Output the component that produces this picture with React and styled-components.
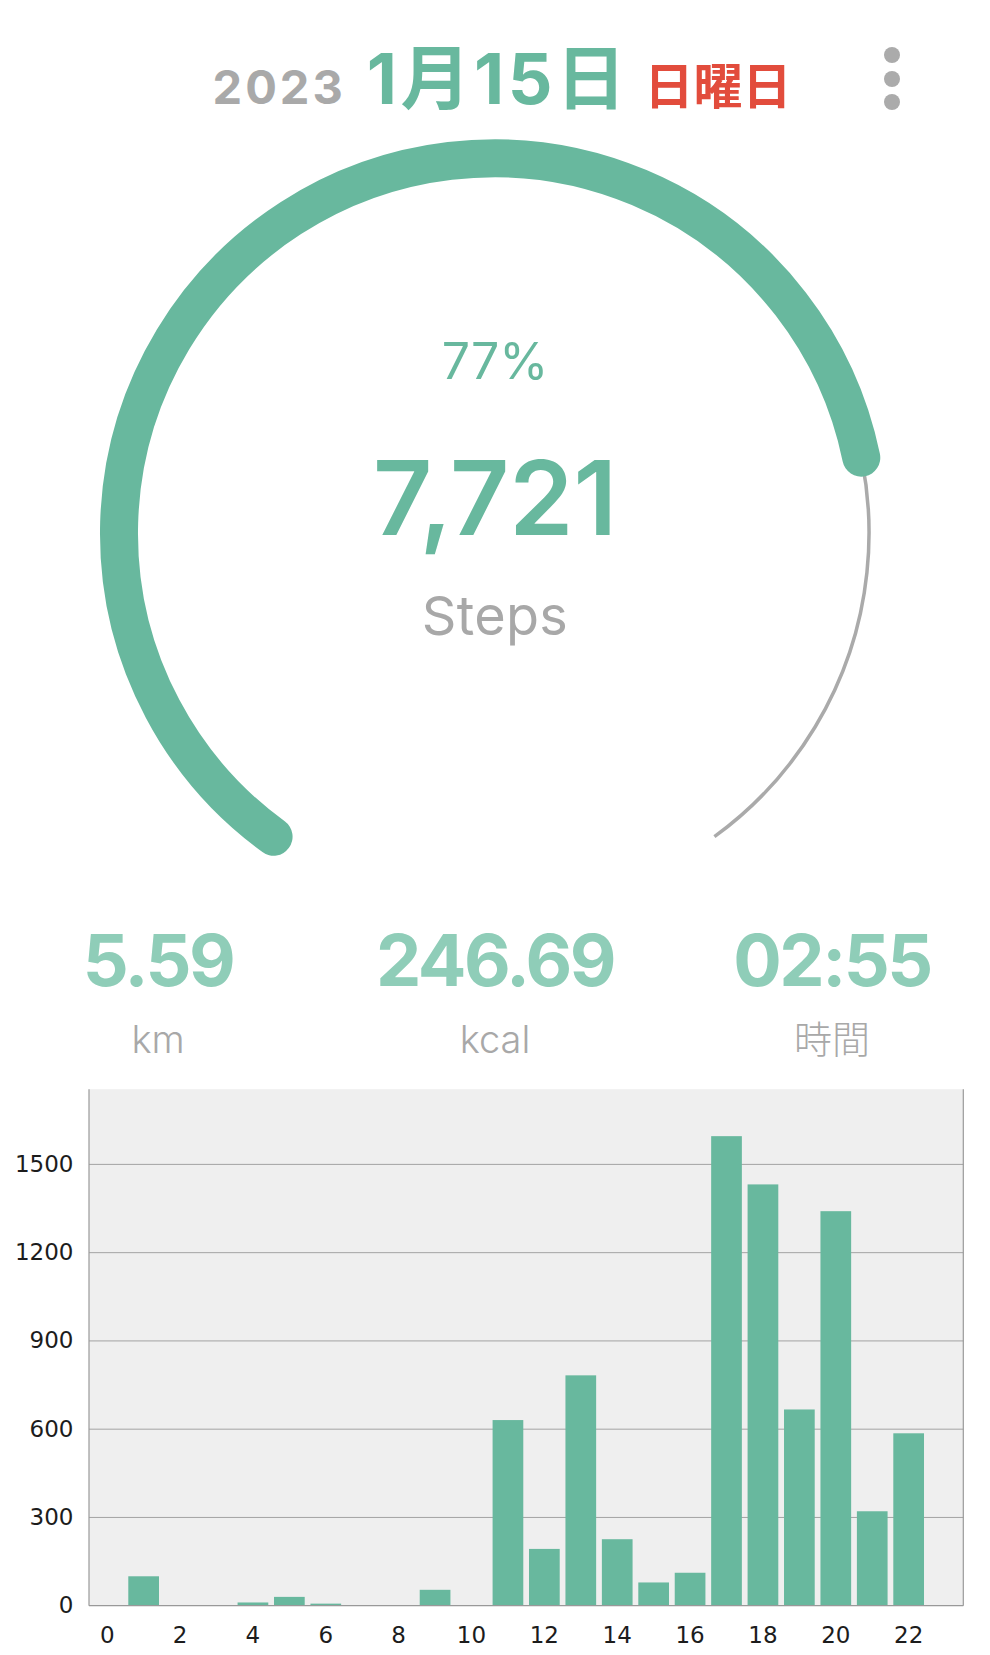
import React from 'react';
import styled, { createGlobalStyle } from 'styled-components';

const GREEN = '#68b89e';
const LIGHT_GREEN = '#8fcdb8';
const GREY_TEXT = '#a8a8a8';

const GlobalStyle = createGlobalStyle`
  html, body { margin: 0; padding: 0; background: #fff; }
  body {
    font-family: "Inter", "Noto Sans CJK JP", sans-serif;
    -webkit-font-smoothing: antialiased;
  }
`;

const Page = styled.main`
  width: 990px;
  min-height: 1655px;
  background: #fff;
  overflow: hidden;
`;

const Header = styled.header`
  display: grid;
  grid-template-columns: 1fr auto 1fr;
  align-items: start;
  height: 130px;
`;

const DateLine = styled.h1`
  grid-column: 2;
  margin: 44px 0 0;
  padding-left: 14px;
  display: flex;
  align-items: baseline;
  font-weight: 700;
  line-height: 1;
  white-space: nowrap;
`;

const Year = styled.span`
  font-size: 47px;
  letter-spacing: 3px;
  color: #a9a9a9;
  margin-right: 21px;
`;

const MonthDay = styled.span`
  font-size: 70px;
  letter-spacing: 3.5px;
  color: ${GREEN};
  margin-right: 15px;
`;

const Weekday = styled.span`
  font-size: 49px;
  color: #e24c3c;
`;

const MenuButton = styled.button`
  grid-column: 3;
  justify-self: end;
  margin: 47px 90px 0 0;
  padding: 0;
  border: 0;
  background: none;
  display: flex;
  flex-direction: column;
  gap: 7.5px;
`;

const Dot = styled.span`
  display: block;
  width: 16px;
  height: 16px;
  border-radius: 50%;
  background: #ababab;
`;

const Gauge = styled.section`
  position: relative;
  height: 770px;
  box-sizing: border-box;
  padding-top: 206px;
  display: flex;
  flex-direction: column;
  align-items: center;
`;

const GaugeSvg = styled.svg`
  position: absolute;
  left: 0;
  top: 0;
`;

const Percent = styled.div`
  position: relative;
  font-size: 50px;
  line-height: 1;
  font-weight: 400;
  color: ${GREEN};
`;

const StepCount = styled.div`
  position: relative;
  margin-top: 60px;
  font-size: 103px;
  line-height: 1;
  font-weight: 600;
  color: ${GREEN};
`;

const StepLabel = styled.div`
  position: relative;
  margin-top: 40px;
  font-size: 54px;
  line-height: 1;
  font-weight: 400;
  letter-spacing: 0.3px;
  color: ${GREY_TEXT};
`;

const Stats = styled.section`
  display: grid;
  grid-template-columns: repeat(3, 200px);
  column-gap: 137px;
  justify-content: center;
  height: 180px;
  box-sizing: border-box;
  padding-top: 24px;
`;

const Stat = styled.div`
  display: flex;
  flex-direction: column;
  align-items: center;
`;

const StatValue = styled.div`
  font-size: 72px;
  line-height: 1;
  font-weight: 700;
  letter-spacing: -2.5px;
  color: ${LIGHT_GREEN};
`;

const StatUnit = styled.div`
  margin-top: 24px;
  font-size: 38px;
  line-height: 1;
  font-weight: 300;
  color: ${GREY_TEXT};
`;

const ChartSvg = styled.svg`
  display: block;
  font-family: "DejaVu Sans", sans-serif;
  font-size: 23px;
  fill: #1c1c1c;
`;

const CX = 494;
const CY = 403.3;
const R = 375;
const START = 126;
const SPAN = 288;

const polar = (deg) => {
  const a = (deg * Math.PI) / 180;
  return [CX + R * Math.cos(a), CY + R * Math.sin(a)];
};

const arcPath = (fromDeg, toDeg) => {
  const [x1, y1] = polar(fromDeg);
  const [x2, y2] = polar(toDeg);
  const large = toDeg - fromDeg > 180 ? 1 : 0;
  return `M ${x1} ${y1} A ${R} ${R} 0 ${large} 1 ${x2} ${y2}`;
};

const steps = 7721;
const goal = 10000;

const hourly = [0, 100, 0, 0, 11, 30, 7, 0, 0, 54, 0, 631, 193, 783, 226, 79, 112, 1596, 1432, 667, 1341, 321, 586, 0];

const PLOT_L = 89;
const PLOT_R = 963.3;
const PLOT_T = 9.2;
const PLOT_B = 525.7;
const Y_MAX = 1755.6;
const SLOT = (PLOT_R - PLOT_L) / 24;
const BAR_W = 30.7;
const yOf = (v) => PLOT_B - (v / Y_MAX) * (PLOT_B - PLOT_T);

function StepChart() {
  const ticks = [0, 300, 600, 900, 1200, 1500];
  const hours = [0, 2, 4, 6, 8, 10, 12, 14, 16, 18, 20, 22];
  return (
    <ChartSvg width="990" height="575" viewBox="0 0 990 575">
      <rect x={PLOT_L} y={PLOT_T} width={PLOT_R - PLOT_L} height={PLOT_B - PLOT_T} fill="#efefef" />
      {ticks.slice(1).map((t) => (
        <line key={t} x1={PLOT_L} x2={PLOT_R} y1={yOf(t)} y2={yOf(t)} stroke="#a3a3a3" strokeWidth="1" />
      ))}
      {hourly.map((v, i) =>
        v > 0 ? (
          <rect
            key={i}
            x={PLOT_L + SLOT * i + (SLOT - BAR_W) / 2}
            y={yOf(v)}
            width={BAR_W}
            height={PLOT_B - yOf(v)}
            fill={GREEN}
          />
        ) : null
      )}
      <line x1={PLOT_L} x2={PLOT_L} y1={PLOT_T} y2={PLOT_B} stroke="#999" strokeWidth="1.2" />
      <line x1={PLOT_R} x2={PLOT_R} y1={PLOT_T} y2={PLOT_B} stroke="#999" strokeWidth="1.2" />
      <line x1={PLOT_L} x2={PLOT_R} y1={PLOT_B} y2={PLOT_B} stroke="#999" strokeWidth="1.2" />
      {ticks.map((t) => (
        <text key={t} x="73.5" y={yOf(t) + 7.4} textAnchor="end">
          {t}
        </text>
      ))}
      {hours.map((h) => (
        <text key={h} x={PLOT_L + SLOT * h + SLOT / 2} y="562.7" textAnchor="middle">
          {h}
        </text>
      ))}
    </ChartSvg>
  );
}

export default function App() {
  const pct = steps / goal;
  const greenEnd = START + SPAN * pct;
  return (
    <Page>
      <GlobalStyle />
      <Header>
        <DateLine>
          <Year>2023</Year>
          <MonthDay>1月15日</MonthDay>
          <Weekday>日曜日</Weekday>
        </DateLine>
        <MenuButton aria-label="menu">
          <Dot />
          <Dot />
          <Dot />
        </MenuButton>
      </Header>

      <Gauge>
        <GaugeSvg width="990" height="770" viewBox="0 0 990 770">
          <path d={arcPath(START, START + SPAN)} fill="none" stroke="#aaaaaa" strokeWidth="3.5" />
          <path d={arcPath(START, greenEnd)} fill="none" stroke={GREEN} strokeWidth="38" strokeLinecap="round" />
        </GaugeSvg>
        <Percent>{Math.round(pct * 100)}%</Percent>
        <StepCount>{steps.toLocaleString('en-US')}</StepCount>
        <StepLabel>Steps</StepLabel>
      </Gauge>

      <Stats>
        <Stat>
          <StatValue>5.59</StatValue>
          <StatUnit>km</StatUnit>
        </Stat>
        <Stat>
          <StatValue>246.69</StatValue>
          <StatUnit>kcal</StatUnit>
        </Stat>
        <Stat>
          <StatValue>02:55</StatValue>
          <StatUnit>時間</StatUnit>
        </Stat>
      </Stats>

      <StepChart />
    </Page>
  );
}
